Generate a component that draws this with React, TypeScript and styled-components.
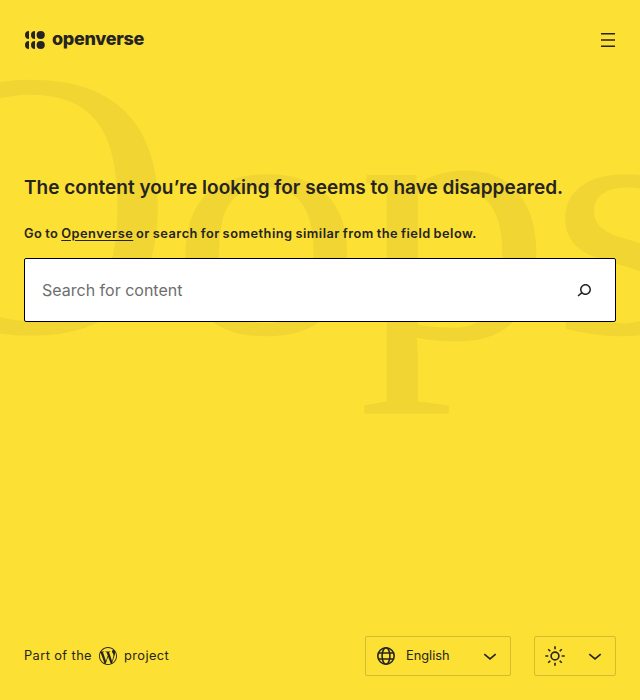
import React from "react";
import styled, { createGlobalStyle } from "styled-components";
import { SiWordpress } from "react-icons/si";

const GlobalStyle = createGlobalStyle`
  *, *::before, *::after { box-sizing: border-box; }
  body {
    margin: 0;
    background: #fce033;
    color: #262422;
    font-family: Inter, "Liberation Sans", sans-serif;
    font-optical-sizing: none;
  }
`;

const Page = styled.div`
  position: relative;
  display: flex;
  flex-direction: column;
  height: 700px;
  overflow: hidden;
`;

const Backdrop = styled.svg`
  position: absolute;
  inset: 0;
  width: 100%;
  height: 100%;
  pointer-events: none;
`;

const BackdropLetter = styled.text`
  font-family: "Liberation Serif", serif;
  font-size: 372px;
  fill: #f1d633;
`;

const Header = styled.header`
  position: relative;
  display: flex;
  align-items: center;
  justify-content: space-between;
  height: 80px;
  padding: 0 20px 0 24px;
`;

const Brand = styled.a`
  display: flex;
  align-items: center;
  gap: 7px;
  color: inherit;
`;

const Wordmark = styled.span`
  font-size: 18px;
  line-height: 20px;
  font-weight: 800;
  letter-spacing: -0.3px;
  margin-top: -2px;
`;

const IconButton = styled.button`
  display: flex;
  padding: 0;
  border: 0;
  background: none;
  color: inherit;
`;

const Icon = styled.svg`
  display: block;
  flex: none;
  width: 24px;
  height: 24px;
  fill: currentColor;
`;

const Main = styled.main`
  position: relative;
  flex: 1;
  padding: 95px 24px 0;
`;

const Title = styled.h1`
  margin: 0;
  font-size: 19px;
  line-height: 26px;
  font-weight: 600;
  letter-spacing: 0.01px;
  white-space: nowrap;
`;

const Hint = styled.p`
  margin: 23px 0 15px;
  font-size: 12.8px;
  line-height: 19px;
  font-weight: 600;
  letter-spacing: 0.5px;
  word-spacing: -0.9px;
  white-space: nowrap;
`;

const HomeLink = styled.a`
  text-decoration: underline;
  text-underline-offset: 2px;
`;

const SearchBar = styled.form`
  display: flex;
  align-items: center;
  height: 64px;
  padding: 0 19px 0 17px;
  border: 1px solid #000;
  border-radius: 2px;
  background: #fff;
`;

const SearchInput = styled.input`
  flex: 1;
  min-width: 0;
  padding: 0;
  border: 0;
  outline: 0;
  background: none;
  font: 400 16px/24px Inter, "Liberation Sans", sans-serif;
  color: #262422;
  &::placeholder { color: #6e6e6e; opacity: 1; }
`;

const Footer = styled.footer`
  position: relative;
  display: flex;
  align-items: center;
  height: 40px;
  margin-bottom: 24px;
  padding: 0 24px;
  font-size: 12.8px;
  line-height: 20px;
`;

const Credit = styled.a`
  display: flex;
  align-items: center;
  gap: 7px;
  margin-right: auto;
  letter-spacing: 0.42px;
  color: inherit;
`;

const CreditText = styled.span`
  margin-top: -1px;
`;

const Select = styled.button<{ $width: number; $gap: number }>`
  display: flex;
  align-items: center;
  width: ${(p) => p.$width}px;
  height: 40px;
  margin-left: ${(p) => p.$gap}px;
  padding: 0 8px;
  border: 1px solid #d3bb32;
  border-radius: 2px;
  background: #fce033;
  color: inherit;
  font: inherit;
`;

const SelectLabel = styled.span`
  margin: -1px 0 0 8px;
`;

const LineIcon = styled(Icon)`
  fill: none;
  stroke: currentColor;
  stroke-width: 1.6;
`;

const Chevron = styled(LineIcon)`
  margin-left: auto;
`;

const LogoMark = styled(Icon)`
  width: 21px;
  height: 20px;
`;

const letters = [
  { char: "O", x: -112, y: 332, sx: 1.065, sy: 1.024 },
  { char: "o", x: 171, y: 333, sx: 1.025, sy: 0.905 },
  { char: "p", x: 358, y: 338, sx: 1.04, sy: 0.955 },
  { char: "s", x: 549, y: 333, sx: 1.06, sy: 0.905 },
];

const ChevronDown = () => (
  <Chevron viewBox="0 0 24 24">
    <path d="m6.3 10.1 5.7 4.8 5.7-4.8" />
  </Chevron>
);

export default function App() {
  return (
    <>
      <GlobalStyle />
      <Page>
        <Backdrop viewBox="0 0 640 700" aria-hidden="true">
          {letters.map((l, i) => (
            <BackdropLetter key={i} transform={`translate(${l.x} ${l.y}) scale(${l.sx} ${l.sy})`}>
              {l.char}
            </BackdropLetter>
          ))}
        </Backdrop>

        <Header>
          <Brand>
            <LogoMark viewBox="0 0 21 20">
              <path d="M5 1v8a4 4 0 0 1 0-8zM5 11v8a4 4 0 0 1 0-8z" />
              <path d="M11 1v8a4 4 0 0 1 0-8zM11 11v8a4 4 0 0 1 0-8z" />
              <circle cx="16.7" cy="5" r="4.1" />
              <circle cx="16.7" cy="15" r="4.1" />
            </LogoMark>
            <Wordmark>openverse</Wordmark>
          </Brand>
          <IconButton aria-label="Menu">
            <Icon viewBox="0 0 24 24">
              <path d="M5 5v1.5h14V5H5zm0 7.8h14v-1.5H5v1.5zM5 19h14v-1.5H5V19z" />
            </Icon>
          </IconButton>
        </Header>

        <Main>
          <Title>The content you’re looking for seems to have disappeared.</Title>
          <Hint>
            Go to <HomeLink>Openverse</HomeLink> or search for something similar from the field below.
          </Hint>
          <SearchBar>
            <SearchInput placeholder="Search for content" />
            <IconButton type="button" aria-label="Search">
              <Icon viewBox="0 0 24 24">
                <path d="M13.5 6C10.5 6 8 8.5 8 11.5c0 1.1.3 2.1.9 3l-3.4 3 1 1.1 3.4-2.9c1 .9 2.2 1.4 3.6 1.4 3 0 5.5-2.5 5.5-5.5C19 8.5 16.5 6 13.5 6zm0 9.5c-2.2 0-4-1.8-4-4s1.8-4 4-4 4 1.8 4 4-1.8 4-4 4z" />
              </Icon>
            </IconButton>
          </SearchBar>
        </Main>

        <Footer>
          <Credit>
            <CreditText>Part of the</CreditText>
            <SiWordpress size={18} />
            <CreditText>project</CreditText>
          </Credit>
          <Select $width={146} $gap={0}>
            <LineIcon viewBox="0 0 24 24">
              <circle cx="12" cy="12" r="8.2" />
              <ellipse cx="12" cy="12" rx="3.9" ry="8.2" />
              <path d="M4.5 9h15M4.5 15h15" />
            </LineIcon>
            <SelectLabel>English</SelectLabel>
            <ChevronDown />
          </Select>
          <Select $width={82} $gap={23}>
            <LineIcon viewBox="0 0 24 24">
              <circle cx="12" cy="12" r="3.9" />
              <path d="M12 2.3v3M12 18.7v3M2.3 12h3M18.7 12h3M5.2 5.2l2.1 2.1M16.7 16.7l2.1 2.1M5.2 18.8l2.1-2.1M16.7 7.3l2.1-2.1" />
            </LineIcon>
            <ChevronDown />
          </Select>
        </Footer>
      </Page>
    </>
  );
}
